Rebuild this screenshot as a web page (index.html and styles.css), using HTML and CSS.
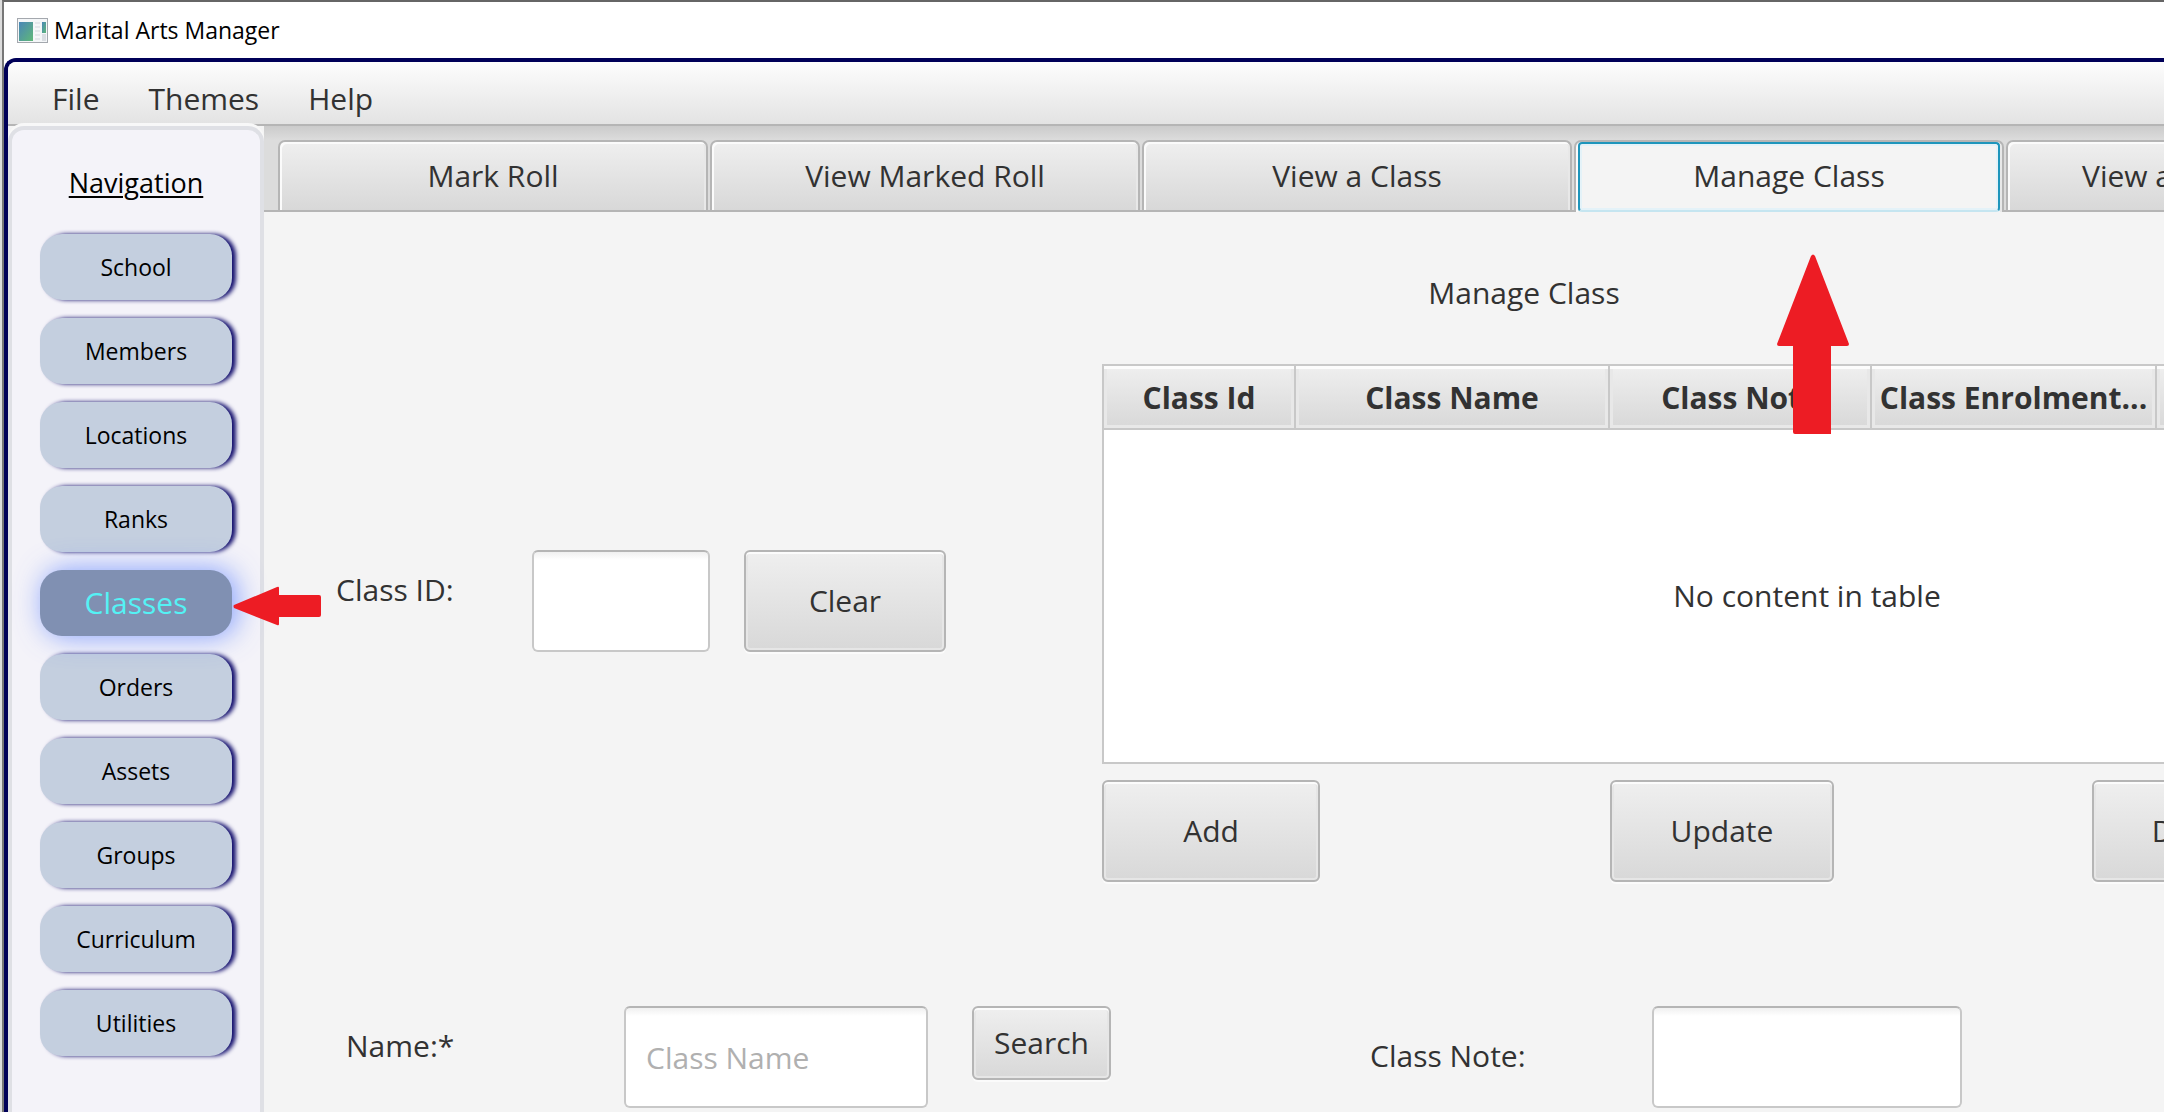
FILE: index.html
```html
<!DOCTYPE html>
<html lang="en">
<head>
<meta charset="utf-8">
<title>Marital Arts Manager</title>
<link rel="stylesheet" href="styles.css">
</head>
<body>
<div class="window">
  <header class="titlebar">
    <svg class="app-icon" viewBox="0 0 31 25" aria-hidden="true">
      <defs>
        <linearGradient id="screen" x1="0" y1="0" x2="1" y2="1">
          <stop offset="0" stop-color="#4a86b8"/>
          <stop offset="1" stop-color="#5fb878"/>
        </linearGradient>
      </defs>
      <rect width="31" height="25" fill="#a4a8ae"/>
      <rect x="1" y="1" width="29" height="23" fill="#f4f6f8"/>
      <rect x="2" y="4" width="14" height="19" fill="url(#screen)"/>
      <path d="M18 5h5M18 9h5M18 13h5M18 17h5M18 21h5" stroke="#d3d8de" stroke-width="1"/>
      <rect x="25" y="4" width="4" height="11" fill="url(#screen)"/>
      <rect x="25" y="16" width="4" height="7" fill="#d9dde2"/>
    </svg>
    <h1 class="title">Marital Arts Manager</h1>
  </header>

  <div class="frame">
    <nav class="menubar" aria-label="Menu">
      <button class="menu" type="button">File</button>
      <button class="menu" type="button">Themes</button>
      <button class="menu" type="button">Help</button>
    </nav>

    <div class="body">
      <nav class="sidebar" aria-label="Navigation">
        <h2 class="nav-title">Navigation</h2>
        <ul class="nav-list">
          <li><button class="nav-btn" type="button">School</button></li>
          <li><button class="nav-btn" type="button">Members</button></li>
          <li><button class="nav-btn" type="button">Locations</button></li>
          <li><button class="nav-btn" type="button">Ranks</button></li>
          <li class="nav-current">
            <button class="nav-btn nav-btn-active" type="button" aria-current="page">Classes</button>
            <svg class="arrow-left" viewBox="0 0 88 40" aria-hidden="true">
              <path d="M1 19 44 1Q46 0 46 2V9H86Q88 9 88 11V29Q88 31 86 31H46V38Q46 40 44 39L1 22Q0 20 1 19Z"/>
            </svg>
          </li>
          <li><button class="nav-btn" type="button">Orders</button></li>
          <li><button class="nav-btn" type="button">Assets</button></li>
          <li><button class="nav-btn" type="button">Groups</button></li>
          <li><button class="nav-btn" type="button">Curriculum</button></li>
          <li><button class="nav-btn" type="button">Utilities</button></li>
        </ul>
      </nav>

      <main class="main">
        <div class="tabs" role="tablist">
          <button class="tab" type="button" role="tab">Mark Roll</button>
          <button class="tab" type="button" role="tab">View Marked Roll</button>
          <button class="tab" type="button" role="tab">View a Class</button>
          <div class="tab-current">
            <button class="tab tab-active" type="button" role="tab" aria-selected="true"><span class="focus-ring">Manage Class</span></button>
            <svg class="arrow-up" viewBox="0 0 72 180" aria-hidden="true">
              <path d="M34 2Q36-1 38 2L72 90Q72 92 70 92H54V180H18Q16 180 16 178V92H2Q0 92 0 90Z"/>
            </svg>
          </div>
          <button class="tab tab-cut" type="button" role="tab">View a</button>
        </div>

        <div class="pane">
          <h2 class="pane-title">Manage Class</h2>

          <div class="upper">
            <form class="finder">
              <label class="finder-label" for="class-id">Class ID:</label>
              <input class="field" id="class-id" type="text">
              <button class="btn" type="button">Clear</button>
            </form>

            <section class="records">
              <table class="grid">
                <colgroup>
                  <col class="col-id"><col class="col-name"><col class="col-note"><col class="col-enrol"><col>
                </colgroup>
                <thead>
                  <tr><th>Class Id</th><th>Class Name</th><th>Class Note</th><th>Class Enrolment...</th><th></th></tr>
                </thead>
                <tbody>
                  <tr><td colspan="5">No content in table</td></tr>
                </tbody>
              </table>
              <div class="actions">
                <button class="btn btn-add" type="button">Add</button>
                <button class="btn btn-update" type="button">Update</button>
                <button class="btn btn-delete" type="button">Delete</button>
              </div>
            </section>
          </div>

          <form class="details">
            <label class="name-label" for="class-name">Name:*</label>
            <input class="field" id="class-name" type="text" placeholder="Class Name">
            <button class="btn btn-search" type="button">Search</button>
            <label class="note-label" for="class-note">Class Note:</label>
            <input class="field" id="class-note" type="text">
          </form>
        </div>
      </main>
    </div>
  </div>
</div>
</body>
</html>
```

FILE: styles.css
```css
* {
  box-sizing: border-box;
}

body {
  margin: 0;
  height: 100vh;
  overflow: hidden;
  padding-left: 2px;
  background: #dcdcdc;
  color: #323232;
  font: 30px/40px "Open Sans", "Noto Sans", sans-serif;
}

h1,
h2,
ul {
  margin: 0;
  padding: 0;
  font-weight: 400;
}

button,
input {
  font: inherit;
  color: inherit;
}

button {
  padding: 0;
  white-space: nowrap;
}

.window {
  height: 100%;
  display: flex;
  flex-direction: column;
  overflow: hidden;
  border-top: 2px solid #666;
  border-left: 2px solid #777;
  background: #fff;
}

.titlebar {
  display: flex;
  align-items: center;
  gap: 6px;
  height: 56px;
  flex: none;
  padding-left: 13px;
  color: #000;
}

.app-icon {
  width: 31px;
  height: 25px;
}

.title {
  font-size: 23px;
  line-height: 32px;
}

.frame {
  flex: 1;
  min-height: 0;
  display: flex;
  flex-direction: column;
  border: solid #000058;
  border-width: 4px 0 0 4px;
  border-radius: 12px 0 0 0;
  background: #f4f4f4;
}

.menubar {
  display: flex;
  flex: none;
  gap: 49px;
  height: 64px;
  padding-left: 44px;
  border-bottom: 2px solid #b5b5b5;
  border-radius: 8px 0 0 0;
  background: linear-gradient(#fdfdfd, #e3e3e3);
}

.menu {
  height: 74px;
  border: 0;
  background: none;
}

.body {
  flex: 1;
  min-height: 0;
  display: flex;
}

/* Navigation */

.sidebar {
  position: relative;
  z-index: 1;
  flex: none;
  width: 256px;
  padding: 33px 28px 0;
  border: 4px solid #dfe0e5;
  border-bottom: 0;
  border-radius: 16px 16px 0 0;
  background: #f4f3f9;
  box-shadow: 0 -3px 0 #f8f8f8;
  color: #000;
}

.nav-title {
  text-align: center;
  font-size: 27px;
  line-height: 40px;
  text-decoration: underline;
  text-decoration-thickness: 2px;
  text-underline-offset: 3px;
}

.nav-list {
  display: grid;
  gap: 18px;
  padding-top: 31px;
  list-style: none;
}

.nav-btn {
  display: block;
  width: 192px;
  height: 66px;
  border: 0;
  border-radius: 22px;
  background: #c4cfdf;
  box-shadow: 4px 0 4px #14106e;
  font-size: 23px;
}

.nav-current {
  position: relative;
}

.nav-btn-active {
  background: #8090b2;
  box-shadow: 4px 0 28px rgba(80, 120, 255, .7);
  color: #54f2f5;
  font-size: 30px;
}

.arrow-left,
.arrow-up {
  position: absolute;
  fill: #ed1c24;
}

.arrow-left {
  left: 193px;
  top: 16px;
  width: 88px;
  height: 40px;
}

/* Tabs */

.main {
  flex: 1;
  min-width: 0;
}

.tabs {
  display: flex;
  gap: 2px;
  height: 86px;
  padding: 14px 0 0 14px;
  border-bottom: 2px solid #b5b5b5;
  background: linear-gradient(#cbcbcb, #dcdcdc 14px);
}

.tab {
  flex: none;
  width: 430px;
  height: 70px;
  border: 2px solid #b5b5b5;
  border-bottom: 0;
  border-radius: 7px 7px 0 0;
  background: linear-gradient(#efefef, #d8d8d8);
  box-shadow: inset 2px 2px 0 #fbfbfb, inset -2px 0 0 #e8e8e8;
}

.tab-current {
  position: relative;
  z-index: 1;
  flex: none;
}

.tab-active {
  display: block;
  height: 72px;
  background: #f4f4f4;
}

.focus-ring {
  display: flex;
  align-items: center;
  justify-content: center;
  height: 70px;
  margin: 0 2px;
  padding-bottom: 2px;
  border: 2px solid #1e95bb;
  border-bottom-color: #c5e5f0;
  border-radius: 4px;
  box-shadow: inset 0 0 0 2px #e4f2f8;
}

.arrow-up {
  left: 203px;
  top: 114px;
  width: 72px;
  height: 180px;
}

.tab-cut {
  padding-left: 74px;
  text-align: left;
}

/* Class editor: wider than the visible window, the rest runs off to the right */

.pane {
  width: 132%;
  padding-top: 61px;
}

.pane-title {
  padding-left: 12px;
  text-align: center;
  font-size: 30px;
  line-height: 40px;
}

.upper {
  display: grid;
  grid-template-columns: 838px 1fr;
  padding: 51px 260px 0 0;
}

.finder {
  display: flex;
  align-items: flex-start;
  padding: 186px 0 0 72px;
}

.finder-label {
  width: 196px;
  padding-top: 20px;
}

.field {
  width: 178px;
  height: 102px;
  padding: 0 20px;
  border: 2px solid #c8c8c8;
  border-top-color: #b5b5b5;
  border-radius: 6px;
  background: linear-gradient(#f0f0f0, #fff 8px);
}

.field::placeholder {
  color: #b0b0b0;
  opacity: 1;
}

.btn {
  width: 202px;
  height: 102px;
  border: 2px solid #b5b5b5;
  border-radius: 6px;
  background: linear-gradient(#efefef, #d8d8d8);
  box-shadow: inset 0 2px 0 #fcfcfc, inset 0 0 0 2px #e6e6e6, 0 2px 0 #fbfbfb;
}

.finder .btn {
  margin-left: 34px;
}

.grid {
  width: 100%;
  table-layout: fixed;
  border-collapse: collapse;
  border: 2px solid #c8c8c8;
  background: #fff;
}

.col-id {
  width: 192px;
}

.col-name {
  width: 314px;
}

.col-note {
  width: 262px;
}

.col-enrol {
  width: 285px;
}

.grid th {
  height: 64px;
  padding: 2px 0 0;
  border: 2px solid #c8c8c8;
  background: linear-gradient(#efefef, #d8d8d8);
  box-shadow: inset 0 3px 0 #fcfcfc, inset 0 0 0 3px #e8e8e8;
  font-size: 30px;
  font-weight: 700;
  white-space: nowrap;
}

.grid td {
  height: 334px;
  padding: 0;
  text-align: center;
}

.actions {
  display: grid;
  grid-template-columns: 508px 482px 1fr;
  padding-top: 16px;
}

.btn-add {
  width: 218px;
}

.btn-update {
  width: 224px;
}

.btn-delete {
  width: 210px;
}

.details {
  display: grid;
  grid-template-columns: 278px 348px 398px 282px 310px;
  align-items: start;
  padding: 124px 0 0 82px;
}

.details .field {
  width: auto;
}

#class-name {
  width: 304px;
}

.btn-search {
  width: 139px;
  height: 74px;
}

.name-label {
  padding-top: 20px;
}

.note-label {
  padding-top: 30px;
}
```
